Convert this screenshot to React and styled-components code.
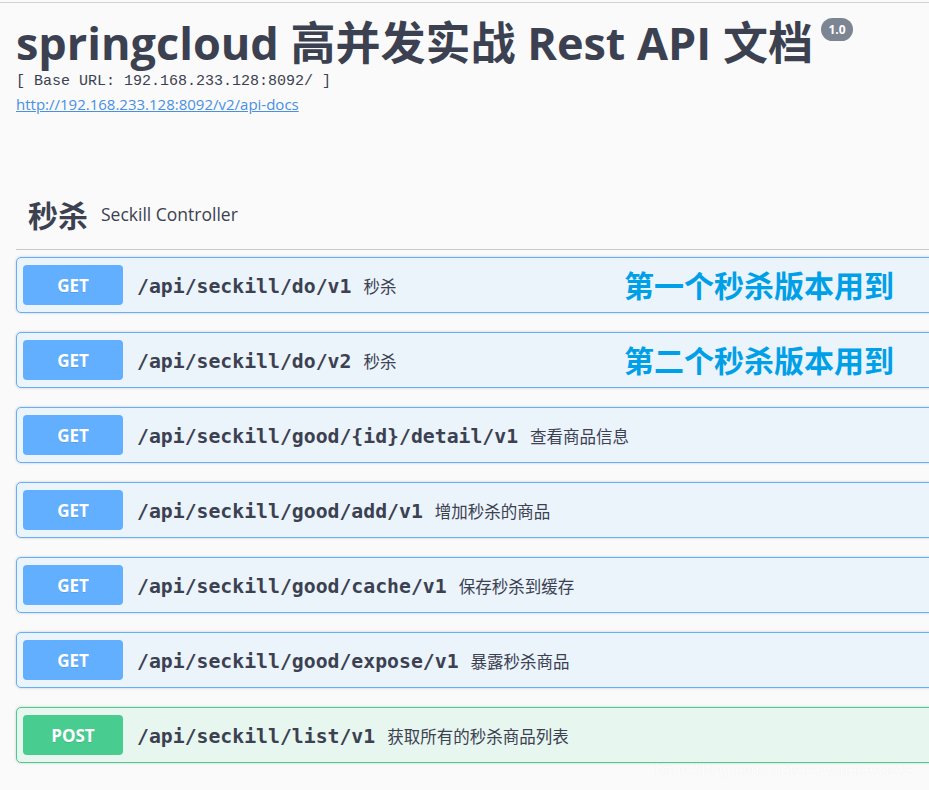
import React from "react";
import styled, { createGlobalStyle } from "styled-components";

const GlobalStyle = createGlobalStyle`
  html, body {
    margin: 0;
    padding: 0;
    background: #fafafa;
    overflow: hidden;
  }
  body {
    font-family: "Open Sans", "Noto Sans CJK SC", sans-serif;
    color: #3b4151;
  }
`;

const ops = [
  { method: "GET", path: "/api/seckill/do/v1", desc: "秒杀", note: "第一个秒杀版本用到" },
  { method: "GET", path: "/api/seckill/do/v2", desc: "秒杀", note: "第二个秒杀版本用到" },
  { method: "GET", path: "/api/seckill/good/{id}/detail/v1", desc: "查看商品信息" },
  { method: "GET", path: "/api/seckill/good/add/v1", desc: "增加秒杀的商品" },
  { method: "GET", path: "/api/seckill/good/cache/v1", desc: "保存秒杀到缓存" },
  { method: "GET", path: "/api/seckill/good/expose/v1", desc: "暴露秒杀商品" },
  { method: "POST", path: "/api/seckill/list/v1", desc: "获取所有的秒杀商品列表" },
];

const colors = {
  GET: { main: "#61affe", bg: "#ebf3fb" },
  POST: { main: "#49cc90", bg: "#e8f6f0" },
};

const App = () => {
  return (
    <>
      <GlobalStyle />
      <Page>
        <Info>
          <Title>
            springcloud 高并发实战 Rest API 文档
            <Version>1.0</Version>
          </Title>
          <BaseUrl>[ Base URL: 192.168.233.128:8092/ ]</BaseUrl>
          <Link href="#">http://192.168.233.128:8092/v2/api-docs</Link>
        </Info>
        <Section>
          <TagHeader>
            <TagName>秒杀</TagName>
            <TagDesc>Seckill Controller</TagDesc>
          </TagHeader>
          <OpList>
            {ops.map((op) => (
              <Opblock key={op.path} method={op.method}>
                <Method method={op.method}>{op.method}</Method>
                <Path>{op.path}</Path>
                <Desc>{op.desc}</Desc>
                {op.note && <Note>{op.note}</Note>}
              </Opblock>
            ))}
          </OpList>
        </Section>
        <Watermark>https://blog.csdn.net/crazymakercircle</Watermark>
      </Page>
    </>
  );
};

const Page = styled.div`
  position: relative;
  margin-top: 2px;
  border-top: 1px solid #d2d2d2;
  height: 787px;
  padding-left: 16px;
  box-sizing: border-box;
  width: 1200px;
`;

const Info = styled.div`
  padding-top: 12px;
`;

const Title = styled.h2`
  margin: 0;
  font-size: 45px;
  font-weight: 700;
  line-height: 56px;
  color: #3b4151;
  font-family: "Open Sans", "Noto Sans CJK SC", sans-serif;
  display: flex;
  align-items: flex-start;
`;

const Version = styled.span`
  margin-left: 8px;
  margin-top: 3px;
  height: 23px;
  width: 32px;
  border-radius: 12px;
  background: #7d8492;
  color: #fff;
  font-size: 12px;
  font-weight: 700;
  line-height: 23px;
  text-align: center;
  font-family: "Open Sans", sans-serif;
`;

const BaseUrl = styled.div`
  font-family: "Liberation Mono", monospace;
  font-size: 15px;
  line-height: 18px;
  color: #3b4151;
  margin-top: 2px;
`;

const Link = styled.a`
  display: inline-block;
  margin-top: 3px;
  font-size: 15px;
  line-height: 20px;
  color: #4990e2;
  text-decoration: underline;
  font-family: "Open Sans", sans-serif;
`;

const Section = styled.div`
  margin-top: 64px;
`;

const TagHeader = styled.div`
  display: flex;
  align-items: center;
  height: 70px;
  padding-left: 12px;
  border-bottom: 1px solid #c8c9cc;
`;

const TagName = styled.span`
  font-size: 30px;
  font-weight: 700;
  color: #3b4151;
  font-family: "Noto Sans CJK SC", sans-serif;
`;

const TagDesc = styled.span`
  margin-left: 13px;
  font-size: 17.5px;
  color: #3b4151;
  font-family: "Open Sans", sans-serif;
`;

const OpList = styled.div`
  display: flex;
  flex-direction: column;
  gap: 19px;
  padding-top: 7px;
`;

const Opblock = styled.div`
  position: relative;
  display: flex;
  align-items: center;
  padding: 7px 6px;
  border: 1px solid ${(p) => colors[p.method].main};
  background: ${(p) => colors[p.method].bg};
  border-radius: 5px;
  box-shadow: 0 0 3px rgba(0, 0, 0, 0.19);
`;

const Method = styled.span`
  width: 100px;
  height: 40px;
  line-height: 42px;
  text-align: center;
  border-radius: 4px;
  background: ${(p) => colors[p.method].main};
  color: #fff;
  font-size: 17px;
  font-weight: 700;
  font-family: "Open Sans", sans-serif;
  text-shadow: 0 1px 0 rgba(0, 0, 0, 0.1);
`;

const Path = styled.span`
  margin-left: 14px;
  padding-top: 2px;
  font-family: "DejaVu Sans Mono", monospace;
  font-weight: 700;
  font-size: 19.8px;
  color: #3b4151;
`;

const Desc = styled.span`
  margin-left: 12px;
  padding-top: 2px;
  font-size: 16.5px;
  color: #3b4151;
  font-family: "Open Sans", "Noto Sans CJK SC", sans-serif;
`;

const Note = styled.span`
  position: absolute;
  left: 607px;
  top: 50%;
  transform: translateY(-52%);
  font-size: 30px;
  font-weight: 700;
  color: #00a0e8;
  font-family: "Noto Sans CJK SC", sans-serif;
`;

const Watermark = styled.div`
  position: absolute;
  left: 655px;
  top: 758px;
  font-family: "Liberation Sans", sans-serif;
  font-size: 15.5px;
  color: rgba(255, 255, 255, 0.95);
  text-shadow: 0 0 1px rgba(0, 0, 0, 0.08);
`;

export default App;
